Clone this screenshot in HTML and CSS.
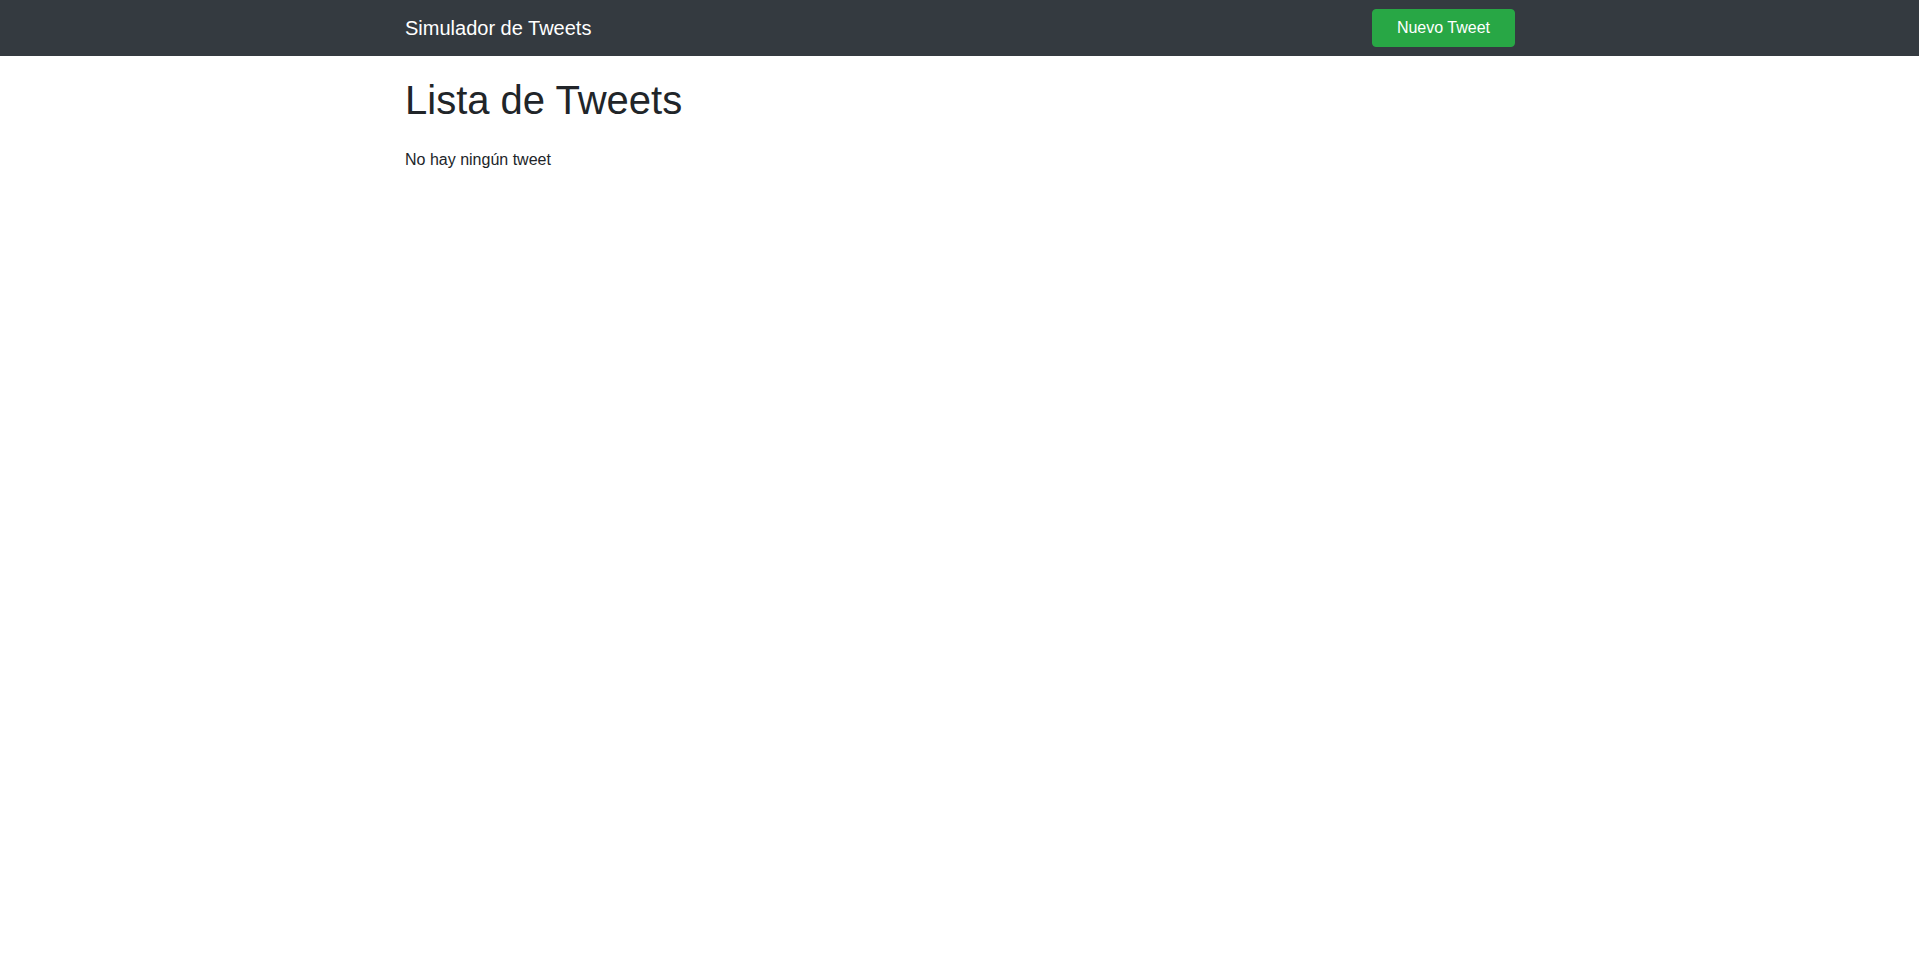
FILE: index.html
```html
<!DOCTYPE html>
<html lang="es">
<head>
<meta charset="utf-8">
<title>Simulador de Tweets</title>
<link rel="stylesheet" href="styles.css">
</head>
<body>
<nav class="navbar">
  <div class="container nav-inner">
    <a class="brand" href="#">Simulador de Tweets</a>
    <button class="btn-success">Nuevo Tweet</button>
  </div>
</nav>
<main class="container">
  <h1 class="title">Lista de Tweets</h1>
  <p class="empty">No hay ningún tweet</p>
</main>
</body>
</html>
```
FILE: styles.css
```css
* { box-sizing: border-box; }
html, body {
  margin: 0;
  padding: 0;
  background: #fff;
  color: #212529;
  font-family: "Liberation Sans", Arial, sans-serif;
  font-size: 16px;
  line-height: 1.5;
}
.container {
  width: 100%;
  max-width: 1140px;
  margin: 0 auto;
  padding: 0 14.5px 0 15.5px;
}
.navbar {
  background: #343a40;
  padding: 8px 0;
}
.nav-inner {
  display: flex;
  align-items: center;
  justify-content: space-between;
}
.brand {
  color: #fff;
  text-decoration: none;
  font-size: 20px;
  line-height: 30px;
  padding: 5px 0;
}
.btn-success {
  background: #28a745;
  border: 1px solid #28a745;
  color: #fff;
  font-family: inherit;
  font-size: 16px;
  line-height: 24px;
  padding: 6px 24px;
  border-radius: 4px;
  cursor: pointer;
}
.title {
  font-size: 40px;
  font-weight: 500;
  line-height: 1.2;
  margin: 20px 0 24px;
}
.empty {
  margin: 0 0 16px;
}
```
